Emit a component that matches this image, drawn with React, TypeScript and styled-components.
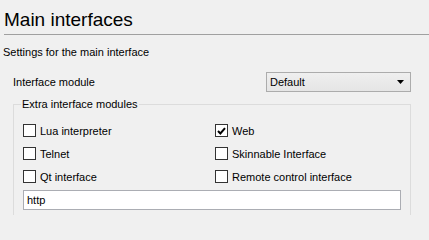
import React, { useState } from 'react';
import styled, { createGlobalStyle } from 'styled-components';

const GlobalStyle = createGlobalStyle`
  html, body {
    margin: 0;
    padding: 0;
    background: #f0f0f0;
    overflow: hidden;
  }
  body {
    font-family: "Liberation Sans", Arial, sans-serif;
    font-size: 11px;
    color: #000;
  }
`;

const Page = styled.div`
  width: 429px;
  height: 215px;
  overflow: hidden;
`;

const Title = styled.h1`
  margin: 0;
  padding: 8px 0 0 4px;
  font-size: 19px;
  font-weight: normal;
  line-height: 23px;
`;

const Separator = styled.div`
  height: 1px;
  margin: 3px 0 0 4px;
  background: #a0a0a0;
`;

const Description = styled.p`
  margin: 10px 0 0 3px;
  line-height: 14px;
`;

const Content = styled.div`
  padding: 0 18px 0 13px;
`;

const FormRow = styled.div`
  display: flex;
  align-items: center;
  justify-content: space-between;
  height: 20px;
  margin-top: 13px;
`;

const Select = styled.div`
  display: flex;
  align-items: center;
  justify-content: space-between;
  box-sizing: border-box;
  width: 145px;
  height: 20px;
  padding: 0 6px 0 3px;
  border: 1px solid #acacac;
  background: linear-gradient(#efefef, #e5e5e5);
`;

const Group = styled.fieldset`
  margin: 6px 0 0;
  padding: 11px 9px 30px;
  border: 1px solid #dcdcdc;
  border-radius: 0;
  min-width: 0;
`;

const Legend = styled.legend`
  margin-left: -2px;
  padding: 0 1px;
  line-height: 13px;
`;

const Grid = styled.div`
  display: grid;
  grid-template-columns: 192px 1fr;
  row-gap: 6px;
`;

const CheckRow = styled.label`
  display: flex;
  align-items: center;
  gap: 4px;
  height: 17px;
  cursor: default;
`;

const Box = styled.span`
  display: flex;
  align-items: center;
  justify-content: center;
  box-sizing: border-box;
  width: 13px;
  height: 13px;
  border: 1px solid #333;
  background: #fff;
`;

const TextInput = styled.input`
  display: block;
  box-sizing: border-box;
  width: 378px;
  height: 20px;
  margin-top: 5px;
  padding: 0 3px;
  border: 1px solid #abadb3;
  background: #fff;
  font: inherit;
  outline: none;
`;

const Check: React.FC<{ label: string; initial?: boolean }> = ({ label, initial = false }) => {
  const [on, setOn] = useState(initial);
  return (
    <CheckRow onClick={() => setOn(!on)}>
      <Box>
        {on && (
          <svg width="9" height="8" viewBox="0 0 9 8">
            <path d="M1 4 L3.4 6.5 L8 1.2" fill="none" stroke="#000" strokeWidth="2" />
          </svg>
        )}
      </Box>
      {label}
    </CheckRow>
  );
};

const App: React.FC = () => (
  <Page>
    <GlobalStyle />
    <Title>Main interfaces</Title>
    <Separator />
    <Description>Settings for the main interface</Description>
    <Content>
      <FormRow>
        <span>Interface module</span>
        <Select>
          <span>Default</span>
          <svg width="7" height="4" viewBox="0 0 7 4">
            <path d="M0 0 H7 L3.5 4 Z" fill="#000" />
          </svg>
        </Select>
      </FormRow>
      <Group>
        <Legend>Extra interface modules</Legend>
        <Grid>
          <Check label="Lua interpreter" />
          <Check label="Web" initial />
          <Check label="Telnet" />
          <Check label="Skinnable Interface" />
          <Check label="Qt interface" />
          <Check label="Remote control interface" />
        </Grid>
        <TextInput defaultValue="http" />
      </Group>
    </Content>
  </Page>
);

export default App;
